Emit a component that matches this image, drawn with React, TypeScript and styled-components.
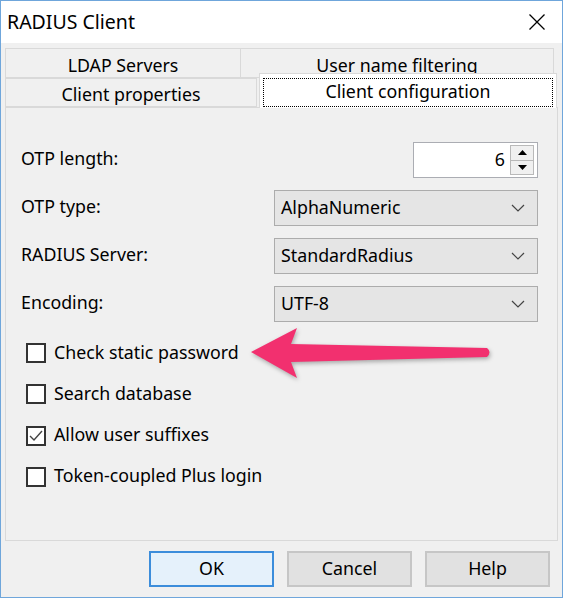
import styled, { createGlobalStyle } from "styled-components";

const GlobalStyle = createGlobalStyle`
  body {
    margin: 0;
    background: #ffffff;
    font-family: "Noto Sans", "Open Sans", sans-serif;
  }
`;

const Window = styled.div`
  position: relative;
  box-sizing: border-box;
  width: 563px;
  height: 598px;
  border: 1px solid #6fa6db;
  display: flex;
  flex-direction: column;
  background: #f0f0f0;
  color: #000;
  font-size: 17.8px;
`;

const TitleBar = styled.div`
  height: 42px;
  flex: none;
  background: #ffffff;
  display: flex;
  align-items: center;
  justify-content: space-between;
  padding-left: 6px;
`;

const Title = styled.div`
  font-size: 19.5px;
  padding-bottom: 2px;
`;

const CloseBox = styled.div`
  width: 50px;
  height: 42px;
  display: flex;
  align-items: center;
  justify-content: center;
`;

const Body = styled.div`
  flex: 1;
  display: flex;
  flex-direction: column;
  padding: 5px 4px 10px 4px;
`;

const TabStrip = styled.div`
  display: flex;
  flex-direction: column;
`;

const TabRow = styled.div<{ $height: number; $front?: boolean }>`
  display: flex;
  height: ${p => p.$height}px;
  position: relative;
  z-index: ${p => (p.$front ? 1 : 0)};
`;

const Tab = styled.div<{ $width: number; $selected?: boolean; $shift?: number }>`
  box-sizing: border-box;
  width: ${p => p.$width}px;
  margin-left: ${p => p.$shift ?? 0}px;
  margin-top: ${p => (p.$selected ? -5 : 0)}px;
  height: ${p => (p.$selected ? "calc(100% + 6px)" : "100%")};
  border: 1px solid #d9d9d9;
  border-bottom: ${p => (p.$selected ? "none" : "1px solid #d9d9d9")};
  background: ${p => (p.$selected ? "#ffffff" : "#f0f0f0")};
  display: flex;
  align-items: center;
  justify-content: center;
  padding: ${p => (p.$selected ? "4px 3px 1px 3px" : "3px 0 0 0")};
`;

const FocusRect = styled.div`
  box-sizing: border-box;
  width: 100%;
  height: 100%;
  border: 1px dotted #000;
  display: flex;
  align-items: center;
  justify-content: center;
  padding-bottom: 3px;
`;

const Panel = styled.div`
  flex: 1;
  border: 1px solid #d9d9d9;
  padding: 34px 19px 0 15px;
  display: flex;
  flex-direction: column;
`;

const FormGrid = styled.div`
  display: grid;
  grid-template-columns: 1fr 264px;
  row-gap: 12px;
  align-items: center;
`;

const Label = styled.div`
  padding-bottom: 4px;
`;

const SpinBox = styled.div`
  justify-self: end;
  box-sizing: border-box;
  width: 125px;
  height: 36px;
  background: #ffffff;
  border: 1px solid #abadb3;
  display: flex;
  align-items: center;
  padding: 2px 3px 2px 0;
`;

const SpinValue = styled.div`
  flex: 1;
  text-align: right;
  padding-right: 5px;
  padding-bottom: 2px;
`;

const SpinButtons = styled.div`
  width: 24px;
  height: 100%;
  display: flex;
  flex-direction: column;
`;

const SpinButton = styled.div`
  flex: 1;
  box-sizing: border-box;
  border: 1px solid #b9b9b9;
  background: #f0f0f0;
  display: flex;
  align-items: center;
  justify-content: center;
  & + & {
    border-top: none;
  }
`;

const Combo = styled.div`
  box-sizing: border-box;
  height: 36px;
  background: #e5e5e5;
  border: 1px solid #acacac;
  display: flex;
  align-items: center;
  justify-content: space-between;
  padding: 0 12px 0 6px;
`;

const ComboText = styled.span`
  padding-bottom: 3px;
`;

const CheckList = styled.div`
  display: flex;
  flex-direction: column;
  gap: 21.3px;
  margin-top: 21px;
  padding-left: 5px;
`;

const CheckRow = styled.div`
  display: flex;
  align-items: center;
  height: 20px;
  gap: 8px;
`;

const CheckBox = styled.div`
  box-sizing: border-box;
  width: 20px;
  height: 20px;
  border: 2px solid #333333;
  background: #ffffff;
  display: flex;
  align-items: center;
  justify-content: center;
`;

const CheckLabel = styled.span`
  padding-bottom: 3px;
`;

const ButtonRow = styled.div`
  display: flex;
  justify-content: flex-end;
  gap: 13px;
  margin-top: 10px;
  padding-right: 8px;
`;

const Button = styled.div<{ $default?: boolean }>`
  box-sizing: border-box;
  width: 125px;
  height: 36px;
  display: flex;
  align-items: center;
  justify-content: center;
  padding-bottom: 3px;
  background: ${p => (p.$default ? "#e5f1fb" : "#e1e1e1")};
  border: ${p => (p.$default ? "2px solid #3c8ddb" : "2px solid #c6c6c6")};
`;

const Arrow = styled.svg`
  position: absolute;
  left: 239px;
  top: 319px;
  width: 260px;
  height: 70px;
  filter: drop-shadow(1px 2px 2px rgba(0, 0, 0, 0.3));
`;

const Chevron = () => (
  <svg width="14" height="8" viewBox="0 0 14 8">
    <polyline points="1,1 7,7 13,1" fill="none" stroke="#444" strokeWidth="1.2" />
  </svg>
);

const Triangle = ({ up }: { up?: boolean }) => (
  <svg width="9" height="5" viewBox="0 0 9 5">
    <polygon points={up ? "0,5 9,5 4.5,0" : "0,0 9,0 4.5,5"} fill="#000" />
  </svg>
);

const combos = [
  { label: "OTP type:", value: "AlphaNumeric" },
  { label: "RADIUS Server:", value: "StandardRadius" },
  { label: "Encoding:", value: "UTF-8" },
];

const checks = [
  { label: "Check static password", checked: false },
  { label: "Search database", checked: false },
  { label: "Allow user suffixes", checked: true },
  { label: "Token-coupled Plus login", checked: false },
];

export default function App() {
  return (
    <>
      <GlobalStyle />
      <Window>
        <TitleBar>
          <Title>RADIUS Client</Title>
          <CloseBox>
            <svg width="16" height="16" viewBox="0 0 16 16">
              <path d="M0.5 0.5 L15.5 15.5 M15.5 0.5 L0.5 15.5" stroke="#000" strokeWidth="1.3" />
            </svg>
          </CloseBox>
        </TitleBar>
        <Body>
          <TabStrip>
            <TabRow $height={30}>
              <Tab $width={236}>LDAP Servers</Tab>
              <Tab $width={314} $shift={-1}>User name filtering</Tab>
            </TabRow>
            <TabRow $height={29} $front>
              <Tab $width={252}>Client properties</Tab>
              <Tab $width={298} $shift={2} $selected>
                <FocusRect>Client configuration</FocusRect>
              </Tab>
            </TabRow>
          </TabStrip>
          <Panel>
            <FormGrid>
              <Label>OTP length:</Label>
              <SpinBox>
                <SpinValue>6</SpinValue>
                <SpinButtons>
                  <SpinButton><Triangle up /></SpinButton>
                  <SpinButton><Triangle /></SpinButton>
                </SpinButtons>
              </SpinBox>
              {combos.map(c => [
                <Label key={c.label}>{c.label}</Label>,
                <Combo key={c.value}>
                  <ComboText>{c.value}</ComboText>
                  <Chevron />
                </Combo>,
              ])}
            </FormGrid>
            <CheckList>
              {checks.map(c => (
                <CheckRow key={c.label}>
                  <CheckBox>
                    {c.checked && (
                      <svg width="14" height="12" viewBox="0 0 14 12">
                        <polyline points="1,6 5,10 13,1" fill="none" stroke="#444" strokeWidth="1.4" />
                      </svg>
                    )}
                  </CheckBox>
                  <CheckLabel>{c.label}</CheckLabel>
                </CheckRow>
              ))}
            </CheckList>
          </Panel>
          <ButtonRow>
            <Button $default>OK</Button>
            <Button>Cancel</Button>
            <Button>Help</Button>
          </ButtonRow>
        </Body>
        <Arrow viewBox="240 320 260 70">
          <path
            d="M251 352 L297 328 L291 344 L487 348 Q492 352 487 357 L291 362 L297 378 Z"
            fill="#f2306f"
          />
        </Arrow>
      </Window>
    </>
  );
}
